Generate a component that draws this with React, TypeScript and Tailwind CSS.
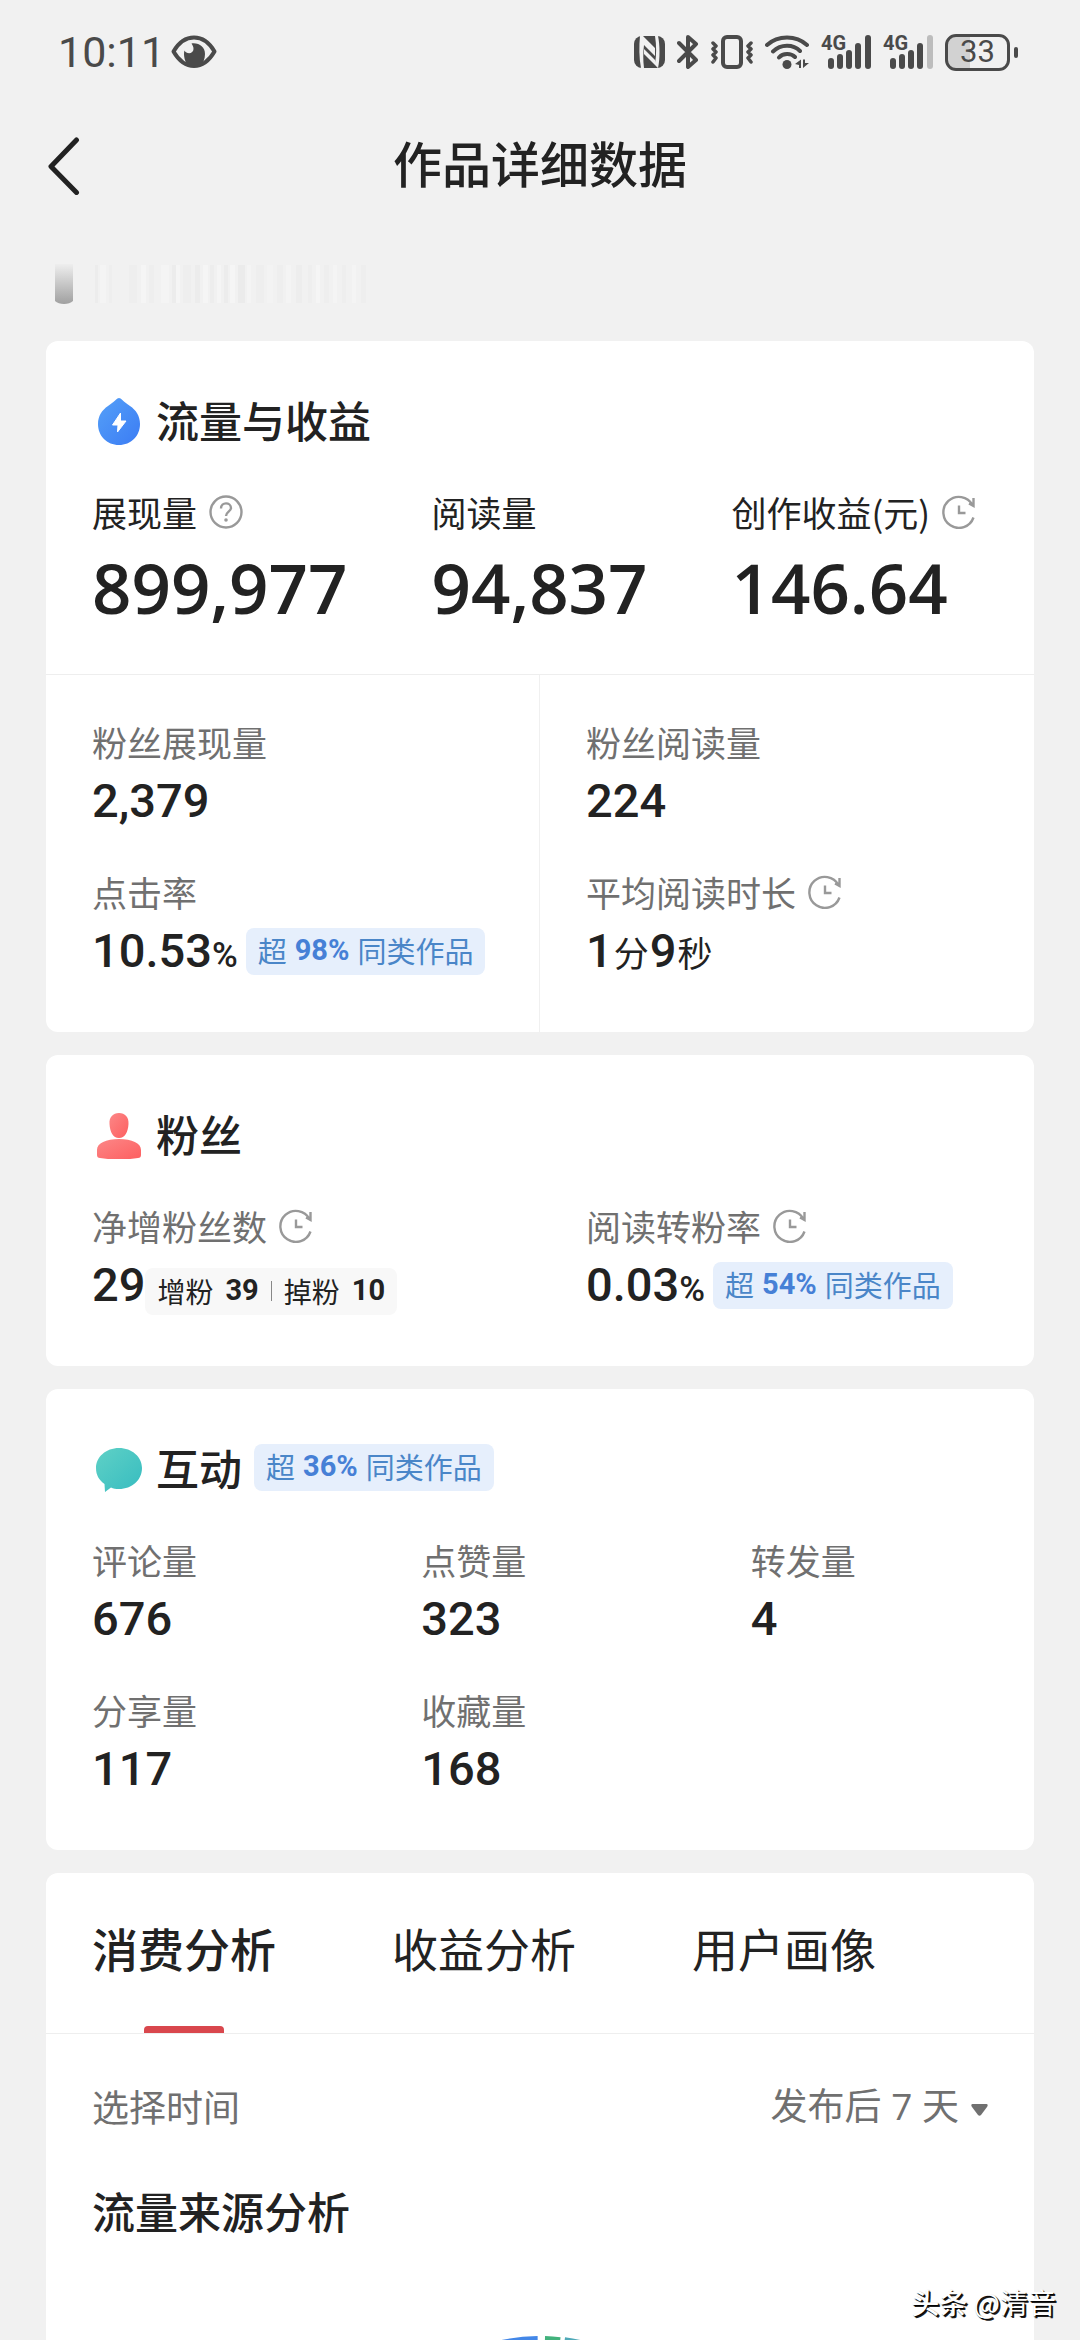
import { useState } from "react"
import type { ReactNode } from "react"

const tabs = ["消费分析", "收益分析", "用户画像"]

const interactions = [
  { label: "评论量", value: "676" },
  { label: "点赞量", value: "323" },
  { label: "转发量", value: "4" },
  { label: "分享量", value: "117" },
  { label: "收藏量", value: "168" },
]

// x offset, width and tone of every smeared stripe of the hidden title
const stripes = [
  [42, 3, "#ebebeb"], [47, 6, "#f6f6f6"], [56, 3, "#eeeeee"], [76, 8, "#ededed"], [88, 5, "#f7f7f7"],
  [96, 5, "#eeeeee"], [108, 8, "#f6f6f6"], [119, 4, "#ebebeb"], [123, 4, "#f8f8f8"], [130, 8, "#ededed"],
  [142, 5, "#ebebeb"], [150, 5, "#f8f8f8"], [157, 4, "#ececec"], [164, 4, "#f8f8f8"], [171, 4, "#ebebeb"],
  [177, 5, "#f8f8f8"], [185, 7, "#e9e9e9"], [194, 4, "#f6f6f6"], [203, 8, "#ededed"], [214, 6, "#f5f5f5"],
  [224, 6, "#ededed"], [233, 5, "#f6f6f6"], [243, 6, "#ececec"], [255, 4, "#ededed"], [263, 4, "#f7f7f7"],
  [271, 5, "#ededed"], [280, 4, "#f6f6f6"], [289, 4, "#ededed"], [299, 4, "#f6f6f6"], [308, 5, "#eeeeee"],
] as const

function Signal({ weak = false }: { weak?: boolean }) {
  return (
    <svg className="h-[44px] w-[50px]" viewBox="0 -4 50 44" fill="#4a4a4a">
      <text x="0" y="16" fontFamily="Roboto" fontSize="20" fontWeight="700">4G</text>
      <rect x="7" y="24" width="6" height="11" rx="3" />
      <rect x="16" y="20" width="6" height="15" rx="3" />
      <rect x="25" y="16" width="6" height="19" rx="3" />
      <rect x="34" y="9" width="6" height="26" rx="3" />
      <rect x="44" y="1" width="6" height="34" rx="3" fill={weak ? "#bdbdbd" : "#4a4a4a"} />
    </svg>
  )
}

function StatusBar() {
  return (
    <div className="flex h-[104px] items-center justify-between pl-[58px] pr-[62px] text-[#4a4a4a]">
      <div className="flex items-center gap-1.5">
        <span className="font-[Roboto] text-[43px]">10:11</span>
        <svg className="h-[34px] w-[46px]" viewBox="0 0 46 34" fill="none">
          <path d="M2.5 16.500C8 7 15 2.500 23 2.500S38 7 43.500 16.500C38 26 31 31 23 31S8 26 2.500 16.500Z" stroke="#4a4a4a" strokeWidth="4" strokeLinejoin="round" />
          <path d="M13.500 15.500c2 4 9 3.500 9-1.500 0-2.500-1-4-2-5.500C28 7.500 34 12 34 19c0 5-2 9-4 11.500-4 1.500-10 1.500-13 0C14 27 12 20 13.500 15.500Z" fill="#4a4a4a" />
        </svg>
      </div>
      <div className="flex items-center gap-3">
        <svg className="h-[32px] w-[31px]" viewBox="0 0 31 32">
          <rect width="31" height="32" rx="8" fill="#4a4a4a" />
          <path d="M6 0 H9 L21 12 V20 L10 9 C9 17 9 24 10 32 H7 C5 22 5 10 6 0Z" fill="#f1f1f1" />
          <path d="M10 13 L21 24 L24 32 L10 18Z" fill="#f1f1f1" />
          <path d="M21 0 H24 C26 9 26 23 24 32 L21 28 C22.500 19 22.500 9 21 0Z" fill="#f1f1f1" />
        </svg>
        <svg className="h-[34px] w-[22px]" viewBox="0 0 22 34" fill="none" stroke="#4a4a4a" strokeWidth="4" strokeLinecap="round" strokeLinejoin="round">
          <path d="M2 8 L19 25 L11 32 V2 L19 9 L2 26" />
        </svg>
        <svg className="h-[34px] w-[42px]" viewBox="0 0 42 34" fill="none" stroke="#4a4a4a" strokeLinecap="round" strokeLinejoin="round">
          <rect x="12" y="2" width="18" height="30" rx="4" strokeWidth="4" />
          <path d="M2 8 L5 11 L2 14 L5 17 L2 20 L5 23 L2 27 M40 8 L37 11 L40 14 L37 17 L40 20 L37 23 L40 27" strokeWidth="3.500" />
        </svg>
        <svg className="h-[34px] w-[44px]" viewBox="0 0 44 34" fill="none" stroke="#4a4a4a" strokeWidth="4" strokeLinecap="round">
          <path d="M2 10 C13 0 31 0 42 10 M8 16.500 C16 9 28 9 35 16 M14 22.500 C18 18 26 18 30 22" />
          <circle cx="22" cy="29.500" r="4.500" fill="#4a4a4a" stroke="none" />
          <path d="M30 29 L36 24.500 V33 H34 V30Z M44 28 L38 33 V24.500 H40 V28Z" fill="#4a4a4a" stroke="none" />
        </svg>
        <Signal />
        <Signal weak />
        <div className="flex items-center gap-1">
          <div className="flex h-[37px] w-[65px] items-center justify-center rounded-[11px] border-3 border-[#4a4a4a] bg-linear-to-r from-[#d2d2d2] from-38% to-transparent to-38%">
            <span className="font-[Roboto] text-[31px]">33</span>
          </div>
          <div className="h-[11px] w-1 rounded-sm bg-[#4a4a4a]" />
        </div>
      </div>
    </div>
  )
}

function ClockIcon() {
  return (
    <svg className="h-[34px] w-[34px]" viewBox="0 0 34 34" fill="none" stroke="#999999" strokeWidth="2.400">
      <path d="M31.500 22.500 A15.500 15.500 0 1 1 30.500 10 M31.500 3 V11 L27 8.500" />
      <path d="M17 10.500 V18 H23.500" />
    </svg>
  )
}

function HelpIcon() {
  return (
    <svg className="h-[34px] w-[34px]" viewBox="0 0 34 34" fill="none" stroke="#999999" strokeWidth="2.400">
      <circle cx="17" cy="17" r="15.500" />
      <path d="M12 13.500 C12 6.500 22 7 22 13 C22 16.500 17 17 17 21" />
      <circle cx="17" cy="25" r="1.800" fill="#999999" stroke="none" />
    </svg>
  )
}

function DropIcon() {
  return (
    <svg className="h-[52px] w-[52px]" viewBox="0 0 52 52">
      <defs>
        <linearGradient id="drop" x1="0" y1="0" x2="1" y2="1">
          <stop offset="0" stopColor="#55a0f8" />
          <stop offset="1" stopColor="#3b7cf4" />
        </linearGradient>
      </defs>
      <path d="M27 5 C29 5 31 8.500 38 13 C44 17 48 23 48 31 C48 43 39 52 27 52 S6 43 6 31 C6 23 10 17 16 13 C23 8.500 25 5 27 5Z" fill="url(#drop)" />
      <path d="M28.500 20 L20.500 32 H26 L25.500 39 L34 28 H28.500Z" fill="#fff" stroke="#fff" strokeLinejoin="round" />
    </svg>
  )
}

function PersonIcon() {
  return (
    <svg className="h-[52px] w-[52px]" viewBox="0 0 52 52">
      <defs>
        <linearGradient id="person" x1="0" y1="0" x2="1" y2="1">
          <stop offset="0" stopColor="#fc8787" />
          <stop offset="1" stopColor="#fd5f60" />
        </linearGradient>
      </defs>
      <path d="M27 6 C33 6 37 10 36.500 17 C36 25 33 31 27 31 S18 25 17.500 17 C17 10 21 6 27 6Z" fill="url(#person)" />
      <path d="M5 43 C5 36 14 32 27 32 S49 36 49 43 V48 C49 50 48 51 46 51 C34 53 20 53 8 51 C6 51 5 50 5 48Z" fill="url(#person)" />
    </svg>
  )
}

function ChatIcon() {
  return (
    <svg className="h-[52px] w-[52px]" viewBox="0 0 52 52">
      <defs>
        <linearGradient id="chat" x1="0" y1="0" x2="1" y2="1">
          <stop offset="0" stopColor="#5fd1c6" />
          <stop offset="1" stopColor="#37bcc0" />
        </linearGradient>
      </defs>
      <path d="M27 7 C40 7 50 16 50 27 C50 39 40 48 27 48 C24 48 21 47.500 19 46.500 L13 51 L12.500 43 C7 39 4 34 4 27 C4 16 14 7 27 7Z" fill="url(#chat)" />
    </svg>
  )
}

function Badge({ percent }: { percent: number }) {
  return (
    <span className="flex h-[47px] items-center gap-2 rounded-lg bg-[#e6effc] px-3 text-[29px] text-[#4a86c8]">
      超<b className="font-[Roboto] text-[#4680d6]">{percent}%</b>同类作品
    </span>
  )
}

function CardTitle({ icon, children, badge }: { icon: ReactNode; children: ReactNode; badge?: ReactNode }) {
  return (
    <div className="flex h-16 items-center gap-3 px-[46px]">
      {icon}
      <h2 className="text-[43px] font-medium">{children}</h2>
      {badge}
    </div>
  )
}

function Label({ children, icon }: { children: ReactNode; icon?: ReactNode }) {
  return (
    <div className="flex items-center gap-3 text-[35px] leading-[48px]">
      {children}
      {icon}
    </div>
  )
}

function Stat({ label, icon, children, extra }: { label: string; icon?: ReactNode; children: ReactNode; extra?: ReactNode }) {
  return (
    <div className="px-[46px]">
      <div className="text-[#707070]">
        <Label icon={icon}>{label}</Label>
      </div>
      <div className="flex h-[66px] items-center pt-1">
        <span className="font-[Roboto,'Noto_Sans_CJK_SC'] text-[47px] font-medium">{children}</span>
        {extra}
      </div>
    </div>
  )
}

function Unit({ children }: { children: ReactNode }) {
  return <span className="mx-px text-[35px] font-normal">{children}</span>
}

function Total({ label, icon, value }: { label: string; icon?: ReactNode; value: string }) {
  return (
    <div>
      <Label icon={icon}>{label}</Label>
      <p className="font-['Open_Sans'] text-[69px] font-semibold leading-[102px]">{value}</p>
    </div>
  )
}

export default function App() {
  const [activeTab, setActiveTab] = useState(tabs[0])
  const [range, setRange] = useState("7")

  return (
    <div className="relative h-screen overflow-hidden bg-[#f1f1f1] font-['Noto_Sans_CJK_SC',sans-serif] text-[#222222]">
      <StatusBar />

      <header className="grid h-[124px] grid-cols-[1fr_auto_1fr] items-center px-[46px]">
        <button aria-label="返回" className="justify-self-start">
          <svg className="h-[58px] w-[34px]" viewBox="0 0 34 58" fill="none" stroke="#222222" strokeWidth="5" strokeLinecap="round" strokeLinejoin="round">
            <path d="M30.500 3 L5 29.500 L30.500 55.500" />
          </svg>
        </button>
        <h1 className="pb-2 text-[49px] font-medium">作品详细数据</h1>
      </header>

      <div className="px-[53px] pb-9 pt-9">
        <svg className="h-[41px] w-[340px]" viewBox="0 0 340 41">
          <defs>
            <linearGradient id="smear" x1="0" y1="0" x2="0" y2="1">
              <stop offset="0" stopColor="#eeeeee" />
              <stop offset="1" stopColor="#a0a0a0" />
            </linearGradient>
          </defs>
          <path d="M2 0 H20 V37 C16 41 6 41 2 37Z" fill="url(#smear)" />
          <g opacity="0.7">
            {stripes.map(([x, width, tone]) => (
              <rect key={x} x={x} y="1" width={width} height="38" fill={tone} />
            ))}
          </g>
        </svg>
      </div>

      <main className="flex flex-col gap-[23px] px-[46px]">
        <section className="rounded-xl bg-white pt-[46px]">
          <CardTitle icon={<DropIcon />}>流量与收益</CardTitle>
          <div className="mt-[37px] flex gap-[84px] border-b border-[#eeeeee] px-[46px] pb-9">
            <Total label="展现量" icon={<HelpIcon />} value="899,977" />
            <Total label="阅读量" value="94,837" />
            <Total label="创作收益(元)" icon={<ClockIcon />} value="146.64" />
          </div>
          <div className="grid grid-cols-2">
            <div className="flex flex-col gap-9 border-r border-[#f0f0f0] pb-[50px] pt-[43px]">
              <Stat label="粉丝展现量">2,379</Stat>
              <Stat label="点击率" extra={<div className="ml-2"><Badge percent={98} /></div>}>
                10.53<span className="text-[35px]">%</span>
              </Stat>
            </div>
            <div className="flex flex-col gap-9 pb-[50px] pt-[43px]">
              <Stat label="粉丝阅读量">224</Stat>
              <Stat label="平均阅读时长" icon={<ClockIcon />}>
                1<Unit>分</Unit>9<Unit>秒</Unit>
              </Stat>
            </div>
          </div>
        </section>

        <section className="rounded-xl bg-white pb-[50px] pt-[46px]">
          <CardTitle icon={<PersonIcon />}>粉丝</CardTitle>
          <div className="mt-[37px] grid grid-cols-2">
            <Stat
              label="净增粉丝数"
              icon={<ClockIcon />}
              extra={
                <span className="mt-3 flex h-[47px] items-center rounded-lg bg-[#f8f8f8] px-3 text-[28px]">
                  增粉<b className="ml-3 font-[Roboto] text-[29px]">39</b>
                  <i className="mx-3 h-5 w-px bg-[#888888]" />
                  掉粉<b className="ml-3 font-[Roboto] text-[29px]">10</b>
                </span>
              }
            >
              29
            </Stat>
            <Stat label="阅读转粉率" icon={<ClockIcon />} extra={<div className="ml-2"><Badge percent={54} /></div>}>
              0.03<span className="text-[35px]">%</span>
            </Stat>
          </div>
        </section>

        <section className="rounded-xl bg-white pb-[50px] pt-[46px]">
          <CardTitle icon={<ChatIcon />} badge={<Badge percent={36} />}>互动</CardTitle>
          <div className="mt-[37px] grid grid-cols-3 gap-y-9">
            {interactions.map((item) => (
              <Stat key={item.label} label={item.label}>{item.value}</Stat>
            ))}
          </div>
        </section>

        <section className="rounded-xl bg-white">
          <div role="tablist" className="flex gap-[116px] border-b border-[#eeeeee] px-[46px]">
            {tabs.map((tab) => (
              <button
                key={tab}
                role="tab"
                aria-selected={tab === activeTab}
                onClick={() => setActiveTab(tab)}
                className={
                  tab === activeTab
                    ? "flex flex-col items-center pt-10 text-[46px] font-medium leading-[68px]"
                    : "flex flex-col items-center pt-10 text-[46px] leading-[68px]"
                }
              >
                {tab}
                {tab === activeTab && <span className="mt-[45px] h-[7px] w-20 rounded-t bg-[#d9474d]" />}
              </button>
            ))}
          </div>
          <div className="flex items-center justify-between px-[46px] pt-11 text-[37px] leading-[56px] text-[#707070]">
            <label htmlFor="range">选择时间</label>
            <div className="flex items-center gap-3">
              <select
                id="range"
                value={range}
                onChange={(e) => setRange(e.target.value)}
                className="appearance-none bg-transparent text-right font-['Open_Sans','Noto_Sans_CJK_SC'] [field-sizing:content]"
              >
                <option value="7">发布后 7 天</option>
              </select>
              <svg className="mt-2 h-3 w-[17px]" viewBox="0 0 17 12" fill="#707070">
                <path d="M1.500 0 H15.500 C17 0 17 2 16 3 L10 11 C9 12 8 12 7 11 L1 3 C0 2 0 0 1.500 0Z" />
              </svg>
            </div>
          </div>
          <h3 className="px-[46px] pt-11 text-[43px] font-medium leading-[64px]">流量来源分析</h3>
          <svg className="mx-auto mt-[94px] h-[372px] w-[372px]" viewBox="0 0 372 372" fill="none" strokeWidth="60">
            <path d="M30 186 A156 156 0 0 1 184 30" stroke="#4387e8" />
            <path d="M190 30 A156 156 0 0 1 203 31" stroke="#42b27c" />
            <path d="M207 31 A156 156 0 0 1 342 186" stroke="#4fa9b8" />
          </svg>
        </section>
      </main>

      <div className="absolute bottom-[18px] right-6 text-[28px] leading-[40px] text-white [text-shadow:1px_1px_1px_#000,2px_2px_0_#222]">
        <b className="font-medium">头条</b> @清音
      </div>
    </div>
  )
}
